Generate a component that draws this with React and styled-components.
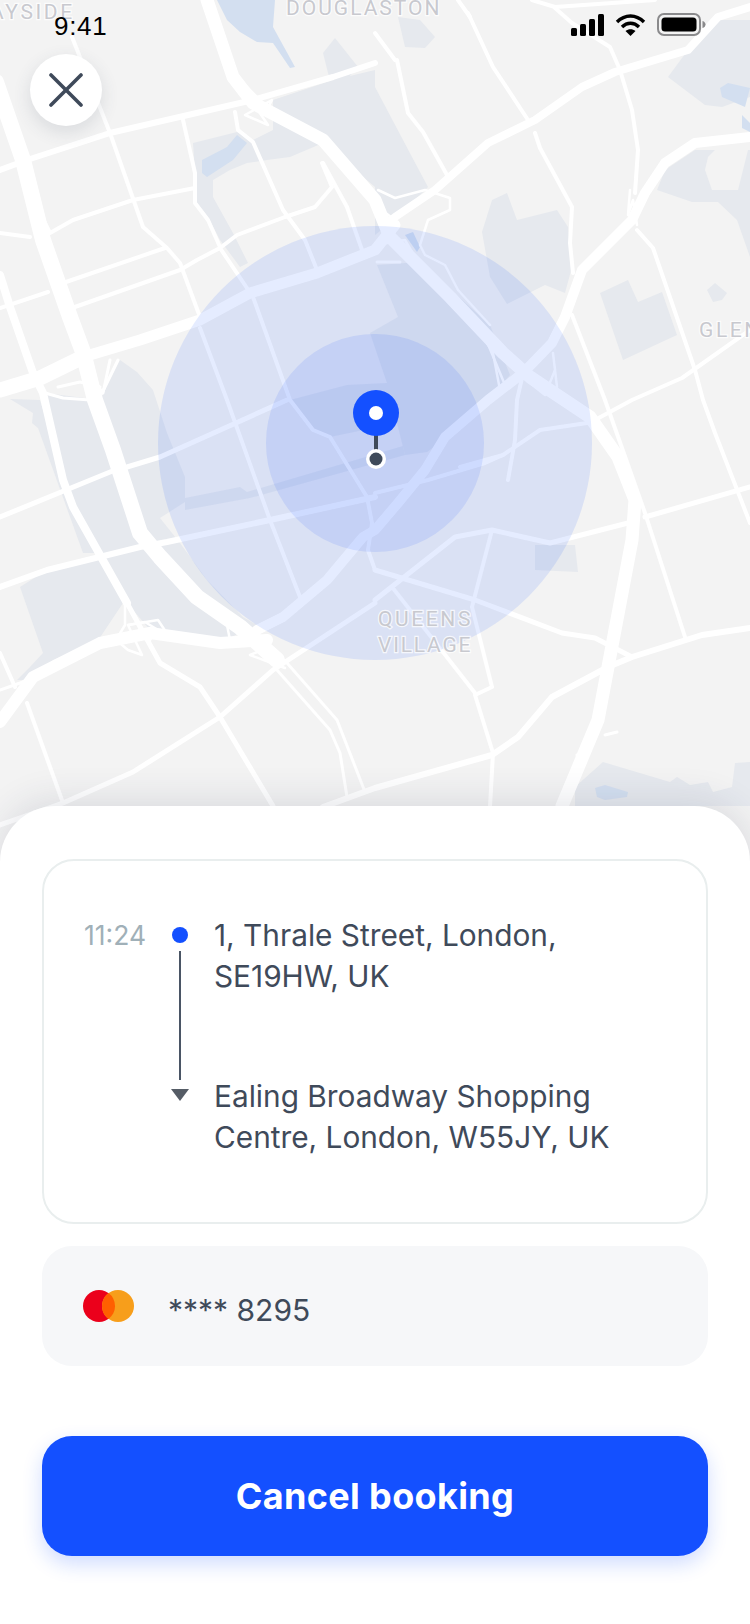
import React from "react";
import styled, { createGlobalStyle } from "styled-components";

const GlobalStyle = createGlobalStyle`
  html, body {
    margin: 0;
    padding: 0;
    background: #fff;
    font-family: "Inter", "Liberation Sans", sans-serif;
  }
`;

const Page = styled.div`
  width: 750px;
  height: 1624px;
  display: flex;
  flex-direction: column;
  overflow: hidden;
  position: relative;
`;

const MapArea = styled.div`
  height: 866px;
  flex: none;
  position: relative;
  background: #f3f3f3;
`;

const MapSvg = styled.svg`
  display: block;
  width: 750px;
  height: 866px;
`;

const Road = styled.polyline`
  fill: none;
  stroke: #fff;
  stroke-width: ${(p) => p.$w};
  stroke-linejoin: round;
  stroke-linecap: round;
`;

const Land = styled.polygon`
  fill: ${(p) => (p.$hole ? "#f3f3f3" : "#e6e9ee")};
`;

const Water = styled.polygon`
  fill: #d3dff0;
`;

const MapLabel = styled.text`
  font-family: "Roboto", "Liberation Sans", sans-serif;
  font-size: 21px;
  letter-spacing: ${(p) => p.$spacing || 2.6}px;
  fill: #c8c9cf;
  stroke: rgba(255, 255, 255, 0.75);
  stroke-width: 2.5px;
  paint-order: stroke;
`;

const StatusBar = styled.div`
  position: absolute;
  top: 0;
  left: 0;
  right: 0;
  height: 50px;
  padding: 12px 44px 0 54px;
  box-sizing: border-box;
  display: flex;
  justify-content: space-between;
  align-items: flex-start;
`;

const Clock = styled.span`
  font-family: "Liberation Sans", sans-serif;
  font-size: 26px;
  letter-spacing: 0.7px;
  line-height: 29px;
  color: #000;
`;

const StatusIcons = styled.div`
  display: flex;
  align-items: center;
  gap: 11px;
  margin-top: 1px;
`;

const CloseButton = styled.button`
  position: absolute;
  top: 54px;
  left: 30px;
  width: 72px;
  height: 72px;
  padding: 0;
  border: none;
  border-radius: 50%;
  background: #fff;
  box-shadow: 0 6px 18px rgba(60, 70, 90, 0.14);
  display: flex;
  align-items: center;
  justify-content: center;
`;

const Sheet = styled.div`
  flex: 1;
  margin-top: -60px;
  position: relative;
  background: #fff;
  border-radius: 56px 56px 0 0;
  box-shadow: 0 -6px 36px rgba(40, 50, 80, 0.12);
  padding: 53px 42px 0;
  display: flex;
  flex-direction: column;
`;

const TripCard = styled.div`
  height: 365px;
  box-sizing: border-box;
  border: 2px solid #e9eeee;
  border-radius: 32px;
  padding: 54px 40px 0;
  display: grid;
  grid-template-columns: 87px 18px 1fr;
  grid-template-rows: 82px 82px;
  row-gap: 79px;
`;

const Time = styled.span`
  font-size: 26.5px;
  line-height: 41px;
  color: #a0b0b8;
`;

const Timeline = styled.div`
  grid-column: 2;
  grid-row: 1 / 3;
  padding-top: 12px;
  display: flex;
  flex-direction: column;
  align-items: center;
`;

const Dot = styled.span`
  width: 16px;
  height: 16px;
  border-radius: 50%;
  background: #1450ff;
`;

const Line = styled.span`
  width: 2px;
  height: 129px;
  margin: 8px 0 9px;
  background: #4a5565;
`;

const Arrow = styled.span`
  width: 0;
  height: 0;
  border-left: 9px solid transparent;
  border-right: 9px solid transparent;
  border-top: 12px solid #555c66;
`;

const Address = styled.div`
  grid-column: 3;
  padding-left: 25px;
  font-size: 29.8px;
  line-height: 41px;
  color: #3f4a5a;
  white-space: nowrap;
`;

const PaymentCard = styled.div`
  margin-top: 22px;
  height: 120px;
  border-radius: 30px;
  background: #f6f7f9;
  padding-left: 41px;
  display: flex;
  align-items: center;
  gap: 34px;
`;

const CardNumber = styled.span`
  margin-top: 8px;
  font-size: 30px;
  line-height: 34px;
  color: #3f4a5a;
`;

const CancelButton = styled.button`
  margin-top: 70px;
  height: 120px;
  border: none;
  border-radius: 30px;
  background: #1450ff;
  box-shadow: 0 8px 20px rgba(20, 80, 255, 0.2);
  font-family: "Inter", "Liberation Sans", sans-serif;
  font-size: 36px;
  font-weight: 700;
  letter-spacing: 0.35px;
  color: #fff;
`;

const lands = [
  "273,100 333,80 375,70 375,187 323,143 290,157 267,160 247,163 230,170 213,180 213,197 233,233 248,263 240,267 220,240 208,217 197,203 193,143 217,137 237,132 253,140 273,130",
  "323,53 335,38 358,67 335,92 328,73",
  "398,17 420,20 435,37 425,48 405,47",
  "375,87 412,157 428,187 400,215 375,235",
  "492,200 507,193 517,220 557,210 568,227 572,267 565,293 545,285 507,304 490,277 482,232",
  "668,77 705,105 722,107 750,97 750,20 718,20 688,50",
  "657,190 692,202 718,202 737,220 750,257 750,150 695,150 665,170",
  "600,293 628,280 638,302 662,292 677,335 623,360",
  "707,290 715,283 727,293 722,300 713,302",
  // left of the motorway, inside and outside the circle
  "45,393 100,400 120,360 137,372 153,390 167,433 185,477 185,502 160,518 180,543 207,580 243,617 257,625 225,640 150,630 127,603 73,507 57,440",
  "10,399 33,413 32,423 38,428 83,553 100,553 73,507 40,400",
  "20,587 43,653 30,667 17,680 30,680 53,660 97,642 123,603 100,557 47,570",
  // the block around the pin
  "377,265 398,317 370,333 387,383 347,385 290,400 313,430 330,437 397,423 405,455 427,452 470,420 510,375 490,325 420,262",
  "185,498 240,487 247,492 403,446 405,455 250,498 185,510",
  "575,806 575,787 603,762 670,782 677,777 690,785 708,782 713,792 732,787 735,763 750,762 750,806",
  "535,545 575,545 578,572 535,570"
];

const parkHole = "708,157 705,170 712,190 738,190 748,150 715,150";

const waters = [
  "217,0 275,0 273,27 295,67 290,68 273,43 257,42 240,32 227,20",
  "202,160 227,147 237,135 247,143 233,160 207,177 202,173",
  "720,88 728,83 750,88 745,107 722,97",
  "742,115 750,123 750,132 742,128",
  "405,235 413,232 420,247 417,252",
  "595,788 605,785 628,792 627,797 605,800 597,797"
];

// thick motorways first, then the smaller streets
const roads = [
  [16, "-4,82 23,160 43,240 70,317 83,352 95,400 113,450 140,533 160,557 197,597 240,627 277,660"],
  [15, "0,390 40,378 83,357"],
  [11, "83,357 140,340 200,320 250,293 317,273 375,250 395,225"],
  [13, "207,0 233,77 253,103 323,140 375,200 390,237 450,297 503,353 530,377 590,417 618,457 635,500 632,540 608,667 598,720 562,806"],
  [8, "750,7 718,17 688,50 615,72 582,87 535,120 488,143 435,190 395,217 385,225"],
  [6, "375,63 333,77 253,100 110,133 27,160 0,170"],
  [10, "750,137 695,143 665,163 645,193 632,220 582,270 565,317 552,343 523,373 488,400 445,437 425,470 398,503 375,530 363,537 327,580 283,617 257,630"],
  [12, "0,722 33,677 100,643 150,633 220,643 267,640"],
  [6, "0,587 47,570 140,547 167,542 270,520 375,497"],
  [5, "0,517 115,470 127,467 160,457 287,400"],
  [4, "72,37 110,133 143,227 167,248 180,263 200,317"],
  [4, "200,328 227,400 270,520 300,597"],
  [4, "183,120 195,173 195,203 208,220 220,247"],
  [4, "235,112 238,130 253,142 283,210 305,240 317,270"],
  [4, "285,217 315,207 332,187 322,163"],
  [4, "285,217 237,235 220,248 197,260 180,270 72,308"],
  [4, "220,248 253,297 290,400 313,430 330,437 367,497 372,523 368,550 375,570"],
  [4, "133,200 195,188"],
  [4, "133,200 73,220 50,233 37,207"],
  [4, "0,233 30,237"],
  [4, "165,248 63,283"],
  [4, "48,292 0,308"],
  [8, "0,275 10,307 33,373 43,393 63,480 73,507 127,603"],
  [5, "127,603 160,663 200,687 220,717 273,806"],
  [4, "323,163 347,207 362,250"],
  [4, "468,13 493,67 528,120"],
  [4, "535,133 540,148 572,207 570,243 573,273"],
  [4, "397,60 408,113 423,132 447,175"],
  [4, "375,33 395,60"],
  [4, "458,0 470,17"],
  [4, "532,0 555,7 655,0"],
  [4, "555,8 572,23 610,47 620,70 632,110 638,150 635,193"],
  [4, "637,230 653,248 695,370 703,400 715,433 750,523"],
  [4, "750,330 682,378 632,400 595,420"],
  [4, "572,315 605,400 645,513 685,637"],
  [5, "645,517 750,487"],
  [5, "628,523 550,543 492,530 455,537 375,600"],
  [6, "750,628 702,635 632,657 608,667 552,697 518,737 492,755 375,788 323,807"],
  [5, "375,570 475,600 562,633 595,638 632,657"],
  [4, "492,530 472,607 492,687 475,695 493,753 490,807"],
  [4, "392,587 475,693"],
  [4, "522,378 517,400 515,440 508,480"],
  [4, "503,455 485,463 428,480 375,493"],
  [4, "460,467 503,455 540,430 587,423"],
  [3, "287,663 337,720 365,792"],
  [3, "277,670 330,730 340,753 347,797"],
  [5, "375,603 273,670 220,717 133,772 63,803 0,825"],
  [4, "27,703 63,803"],
  [4, "0,653 15,687"],
  [3, "0,690 20,683 33,677"],
  [3, "605,735 617,732"],
  [3, "577,755 581,768"],
  // interchanges
  [2.5, "125,600 125,625 116,640 128,650 142,655 128,625 158,620 168,635"],
  [2.5, "128,625 145,622 158,630 150,640 130,632"],
  [2.5, "230,640 227,625 240,627 262,650 250,655 285,668"],
  [3, "45,393 63,398 90,400 102,390"],
  [3, "58,387 80,382 100,387"],
  [3, "80,360 93,377 102,393"],
  [3, "110,360 103,393"],
  [3, "118,360 102,393"],
  [2.5, "245,85 268,108 272,100 245,115 268,125 253,103"],
  [2.5, "378,190 395,198 425,190 450,198 450,210 428,220 420,245 425,255 445,265 458,290 490,325"],
  [2.5, "473,320 493,353 500,390"],
  [2.5, "480,325 505,385 520,375 545,395 555,370"],
  [2.5, "553,353 557,387"],
  [3, "377,262 400,262"],
  [2.5, "375,205 395,220 390,235 375,245 405,240 418,262"],
  [2.5, "630,190 628,215 633,200 637,225"]
];

const Map = () => (
  <MapSvg viewBox="0 0 750 866">
    {lands.map((pts) => (
      <Land key={pts} points={pts} />
    ))}
    <Land $hole points={parkHole} />
    {waters.map((pts) => (
      <Water key={pts} points={pts} />
    ))}
    {roads.map(([w, pts]) => (
      <Road key={pts} $w={w} points={pts} />
    ))}
    <MapLabel x="-10" y="19">AYSIDE</MapLabel>
    <MapLabel x="286" y="15" $spacing={2}>DOUGLASTON</MapLabel>
    <MapLabel x="699" y="337">GLEN</MapLabel>
    <circle cx="375" cy="443" r="217" fill="#1550ff" fillOpacity="0.11" />
    <circle cx="375" cy="443" r="109" fill="#1550ff" fillOpacity="0.105" />
    <MapLabel x="378" y="626">QUEENS</MapLabel>
    <MapLabel x="378" y="652" $spacing={1.8}>VILLAGE</MapLabel>
    <rect x="374" y="434" width="4" height="26" fill="#3f4a5a" />
    <circle cx="376" cy="459" r="10" fill="#fff" />
    <circle cx="376" cy="459" r="6.5" fill="#3f4a5a" />
    <circle cx="376" cy="413" r="23" fill="#1450ff" />
    <circle cx="376" cy="413" r="7" fill="#fff" />
  </MapSvg>
);

const SignalIcon = () => (
  <svg width="33" height="22" viewBox="0 0 33 22">
    <rect x="0" y="14" width="6" height="8" rx="1.5" />
    <rect x="9" y="10" width="6" height="12" rx="1.5" />
    <rect x="18" y="5" width="6" height="17" rx="1.5" />
    <rect x="27" y="0" width="6" height="22" rx="1.5" />
  </svg>
);

const WifiIcon = () => (
  <svg width="31" height="22" viewBox="0 0 31 22" fill="none" stroke="#000" strokeWidth="3.4">
    <path d="M2 8 C10 0 21 0 29 8" />
    <path d="M7 13 C12 8 19 8 24 13" />
    <path d="M15.5 22 L10.5 17 C13.5 14.6 17.5 14.6 20.5 17 Z" fill="#000" stroke="none" />
  </svg>
);

const BatteryIcon = () => (
  <svg width="49" height="23" viewBox="0 0 49 23">
    <rect x="1" y="1" width="42" height="21" rx="6" fill="none" stroke="#8a8a8c" strokeWidth="2" />
    <rect x="4.5" y="4.5" width="35" height="14" rx="3.5" fill="#000" />
    <path d="M45.5 8 C47.5 8.5 48.5 10 48.5 11.5 C48.5 13 47.5 14.5 45.5 15 Z" fill="#8a8a8c" />
  </svg>
);

const CloseIcon = () => (
  <svg width="34" height="34" viewBox="0 0 34 34" stroke="#3f4a5a" strokeWidth="3.6" strokeLinecap="round">
    <line x1="2" y1="2" x2="32" y2="32" />
    <line x1="32" y1="2" x2="2" y2="32" />
  </svg>
);

const MastercardIcon = () => (
  <svg width="51" height="32" viewBox="0 0 51 32">
    <circle cx="16" cy="16" r="16" fill="#eb001b" />
    <circle cx="35" cy="16" r="16" fill="#f79e1b" />
    <path d="M25.5 3.1 A16 16 0 0 1 25.5 28.9 A16 16 0 0 1 25.5 3.1 Z" fill="#ff5f00" />
  </svg>
);

const App = () => (
  <Page>
    <GlobalStyle />
    <MapArea>
      <Map />
      <StatusBar>
        <Clock>9:41</Clock>
        <StatusIcons>
          <SignalIcon />
          <WifiIcon />
          <BatteryIcon />
        </StatusIcons>
      </StatusBar>
      <CloseButton type="button" aria-label="Close">
        <CloseIcon />
      </CloseButton>
    </MapArea>
    <Sheet>
      <TripCard>
        <Time>11:24</Time>
        <Timeline>
          <Dot />
          <Line />
          <Arrow />
        </Timeline>
        <Address>
          1, Thrale Street, London,
          <br />
          SE19HW, UK
        </Address>
        <Address>
          Ealing Broadway Shopping
          <br />
          Centre, London, W55JY, UK
        </Address>
      </TripCard>
      <PaymentCard>
        <MastercardIcon />
        <CardNumber>**** 8295</CardNumber>
      </PaymentCard>
      <CancelButton type="button">Cancel booking</CancelButton>
    </Sheet>
  </Page>
);

export default App;
